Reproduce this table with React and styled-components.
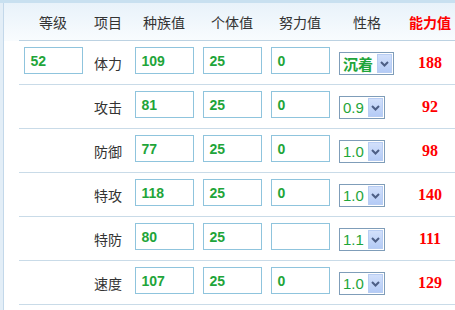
import React from 'react';
import styled, { createGlobalStyle } from 'styled-components';

const GlobalStyle = createGlobalStyle`
	html, body {
		margin: 0;
		padding: 0;
		background: #fff;
		overflow: hidden;
	}
`;

const Frame = styled.div`
	width: 455px;
	height: 310px;
	overflow: hidden;
	border-top: 3px solid #c8e0f0;
	padding-left: 3px;
	background: #e3eef7;
	box-sizing: border-box;
`;

const Panel = styled.div`
	height: 100%;
	border-left: 1px solid #c3d8ea;
	background: linear-gradient(to bottom, #e8f2fa 0px, #f9fcfe 38px, #fff 38px);
	padding-left: 15px;
	font-family: 'Noto Sans CJK SC', 'Liberation Sans', sans-serif;
`;

const Grid = styled.div`
	display: grid;
	grid-template-columns: 68px 42px 70px 66px 70px 64px 62px;
	width: 442px;
`;

const HeadCell = styled.div`
	height: 37px;
	border-bottom: 1px solid #bcd2e2;
	display: flex;
	align-items: center;
	justify-content: center;
	font-size: 14px;
	color: ${({ $hot }) => ($hot ? '#ff0000' : '#333')};
	font-weight: ${({ $hot }) => ($hot ? 'bold' : 'normal')};
`;

const Cell = styled.div`
	height: 43px;
	border-bottom: 1px solid #c9dbe8;
	display: flex;
	align-items: center;
	justify-content: ${({ $left }) => ($left ? 'flex-start' : 'center')};
	padding-left: ${({ $left }) => ($left ? '4px' : '0')};
`;

const Label = styled.span`
	font-size: 14px;
	color: #333;
`;

const Field = styled.div`
	width: 51px;
	height: 25px;
	margin-bottom: 4px;
	border: 1px solid #8fc4dd;
	background: #fff;
	padding-left: 6px;
	box-sizing: content-box;
	display: flex;
	align-items: center;
	font-family: 'Liberation Sans', Arial, sans-serif;
	font-weight: bold;
	font-size: 14px;
	color: #1fa53a;
`;

const Select = styled.div`
	height: 21px;
	border: 1px solid #7f9db9;
	background: #fff;
	display: flex;
	align-items: center;
	padding-left: 3px;
	margin-top: 2px;
	font-family: 'Liberation Sans', 'Noto Sans CJK SC', sans-serif;
	font-size: 15px;
	color: #1fa53a;
`;

const SelectText = styled.span`
	margin-right: 4px;
	font-weight: ${({ $cjk }) => ($cjk ? 'bold' : 'normal')};
`;

const Arrow = styled.div`
	width: 15px;
	height: 19px;
	margin-right: 1px;
	background: linear-gradient(to bottom, #d2e0fb, #b4cbf6);
	border: 1px solid #b8cdf3;
	box-sizing: border-box;
	display: flex;
	align-items: center;
	justify-content: center;
`;

const Stat = styled.span`
	font-family: 'Liberation Serif', 'Times New Roman', serif;
	font-weight: bold;
	font-size: 16px;
	color: #ff0000;
`;

const rows = [
	{ name: '体力', base: '109', iv: '25', ev: '0', nat: '沉着', stat: '188', level: '52' },
	{ name: '攻击', base: '81', iv: '25', ev: '0', nat: '0.9', stat: '92' },
	{ name: '防御', base: '77', iv: '25', ev: '0', nat: '1.0', stat: '98' },
	{ name: '特攻', base: '118', iv: '25', ev: '0', nat: '1.0', stat: '140' },
	{ name: '特防', base: '80', iv: '25', ev: '', nat: '1.1', stat: '111' },
	{ name: '速度', base: '107', iv: '25', ev: '0', nat: '1.0', stat: '129' },
];

const heads = ['等级', '项目', '种族值', '个体值', '努力值', '性格'];

function Chevron() {
	return (
		<svg width="9" height="6" viewBox="0 0 9 6">
			<path d="M1 1 L4.5 4.5 L8 1" fill="none" stroke="#4d5f86" strokeWidth="2" />
		</svg>
	);
}

export default function App() {
	return (
		<>
			<GlobalStyle />
			<Frame>
				<Panel>
					<Grid>
						{heads.map((h) => (
							<HeadCell key={h}>{h}</HeadCell>
						))}
						<HeadCell $hot>能力值</HeadCell>
						{rows.map((r) => (
							<React.Fragment key={r.name}>
								<Cell>{r.level && <Field>{r.level}</Field>}</Cell>
								<Cell>
									<Label>{r.name}</Label>
								</Cell>
								<Cell>
									<Field>{r.base}</Field>
								</Cell>
								<Cell>
									<Field>{r.iv}</Field>
								</Cell>
								<Cell>
									<Field>{r.ev}</Field>
								</Cell>
								<Cell $left>
									<Select>
										<SelectText $cjk={r.nat === '沉着'}>{r.nat}</SelectText>
										<Arrow>
											<Chevron />
										</Arrow>
									</Select>
								</Cell>
								<Cell>
									<Stat>{r.stat}</Stat>
								</Cell>
							</React.Fragment>
						))}
					</Grid>
				</Panel>
			</Frame>
		</>
	);
}
